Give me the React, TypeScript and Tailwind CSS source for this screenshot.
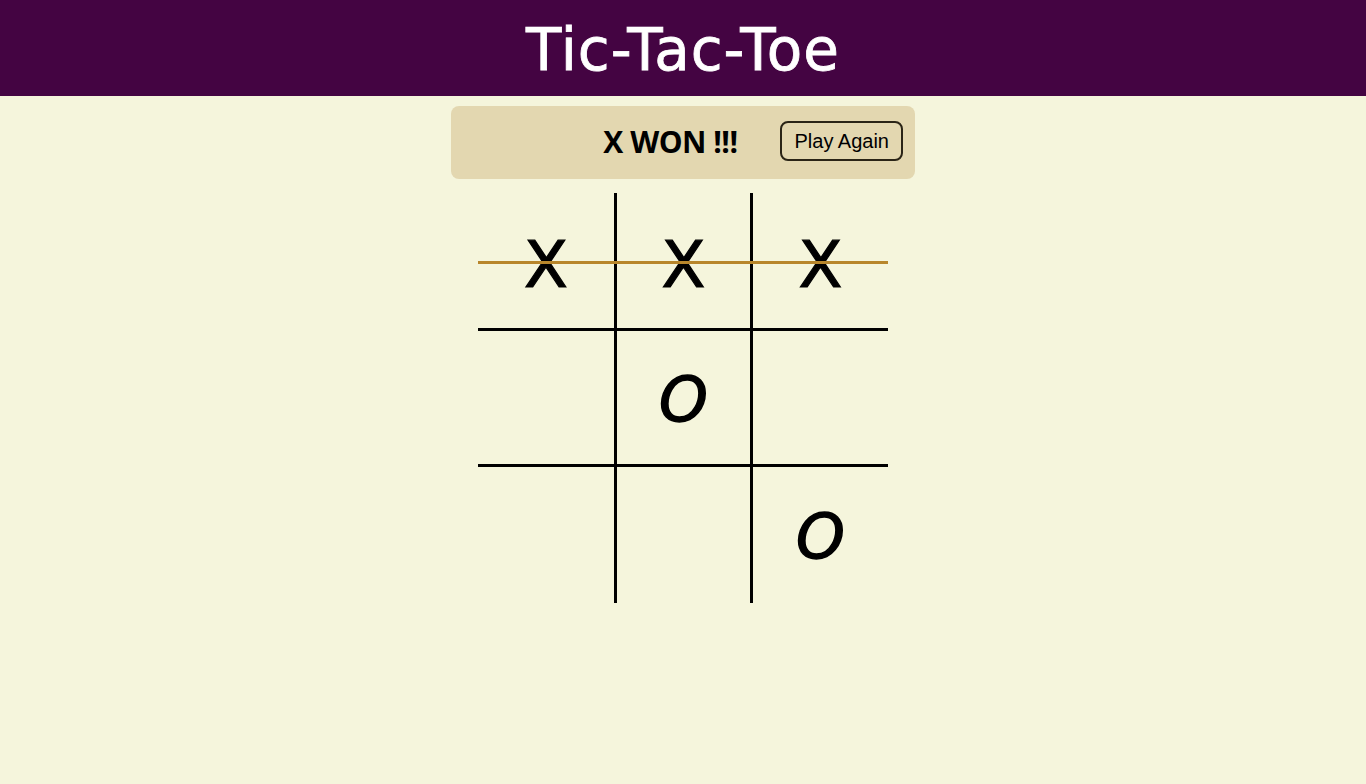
import React from "react";

const board = ["X", "X", "X", "", "O", "", "", "", "O"];

const cellBorder = [
  "border-r-[3px] border-b-[3px]",
  "border-r-[3px] border-b-[3px]",
  "border-b-[3px]",
  "border-r-[3px] border-b-[3px]",
  "border-r-[3px] border-b-[3px]",
  "border-b-[3px]",
  "border-r-[3px]",
  "border-r-[3px]",
  "",
];

export default function App() {
  return (
    <div className="min-h-screen bg-[#f5f5dc] font-['Liberation_Sans',Arial,sans-serif]">
      <header className="h-[96px] bg-[#440442] flex items-center justify-center">
        <h1 className="text-white text-[58px] leading-none tracking-[1px] font-['Comic_Sans_MS','DejaVu_Sans',sans-serif] [-webkit-text-stroke:0.8px_white] pt-[4px]">
          Tic-Tac-Toe
        </h1>
      </header>

      <div className="flex flex-col items-center pt-[10px]">
        <div className="w-[464px] h-[73px] rounded-lg bg-[#e3d7b0] flex items-center justify-end gap-[43px] pr-3 pb-[3px]">
          <span className="text-[30px] font-bold text-black font-['Open_Sans',sans-serif] tracking-[-0.5px]">
            X WON !!!
          </span>
          <button className="h-[40px] px-[12px] rounded-lg border-2 border-[#2a2416] text-[20px] text-black bg-transparent">
            Play Again
          </button>
        </div>

        <div className="relative mt-[14px] w-[410px] h-[410px] grid grid-cols-[139px_136px_135px] grid-rows-[138px_136px_136px]">
          {board.map((v, i) => (
            <div
              key={i}
              className={`flex items-center justify-center border-black ${cellBorder[i]}`}
            >
              {v === "X" && (
                <span className="text-[64px] leading-none text-black font-['Comic_Sans_MS','DejaVu_Sans',sans-serif] [-webkit-text-stroke:1.2px_black] pt-[8px]">
                  X
                </span>
              )}
              {v === "O" && (
                <span className="text-[62px] leading-none italic text-black font-['Comic_Sans_MS','DejaVu_Sans',sans-serif] [-webkit-text-stroke:1.4px_black] pt-[4px]">
                  O
                </span>
              )}
            </div>
          ))}
          <div className="absolute left-0 right-0 top-[68px] h-[3px] bg-[#b8862b]" />
        </div>
      </div>
    </div>
  );
}
